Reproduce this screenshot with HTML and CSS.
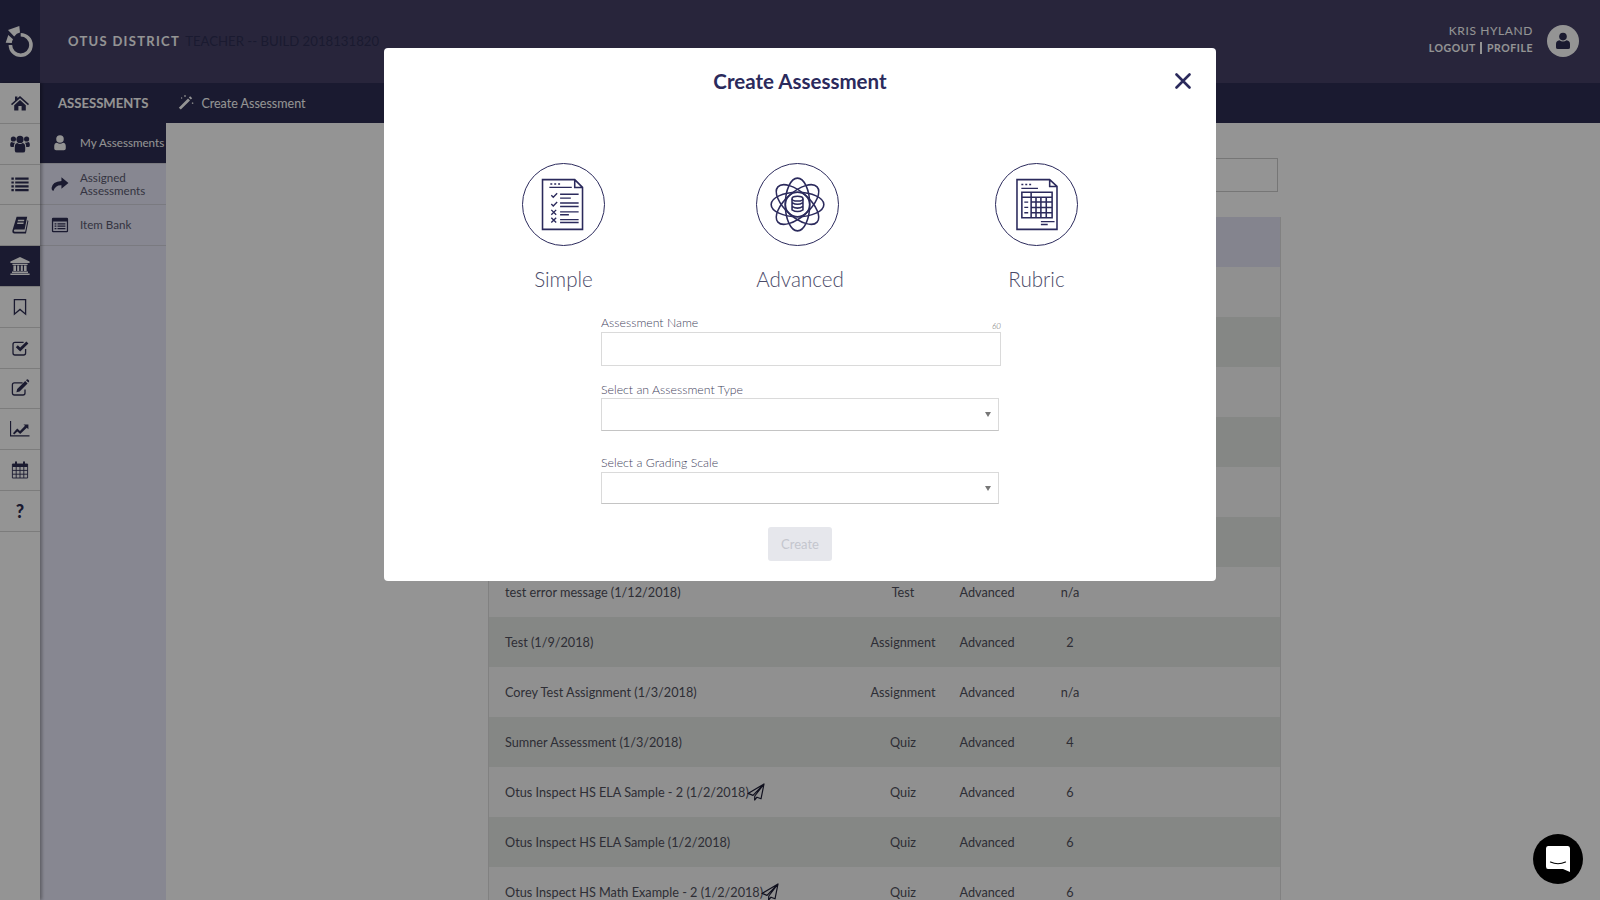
FILE: index.html
```html
<!DOCTYPE html>
<html lang="en">
<head>
  <meta charset="UTF-8" />
  <title>Create Assessment</title>
  <link rel="stylesheet" href="styles.css">
</head>
<body>
  <div class="pagina">
    <header class="topo">
      <div class="logo">
        <svg viewBox="0 0 40 83" width="40" height="83">
          <path d="M20.7 34.7 A10.3 10.3 0 1 1 10.4 45" fill="none" stroke="#fff" stroke-width="3.6"/>
          <path d="M8 30 L19.3 26 L20 32.6 Q16.6 33.2 14.2 36.4 Z" fill="#fff"/>
          <path d="M5.7 42.7 L8.3 35 L13 39.2 Q12 41 11.8 43 Z" fill="#fff"/>
        </svg>
      </div>
      <div class="escola">OTUS DISTRICT</div>
      <div class="build">TEACHER -- BUILD 2018131820</div>
      <div class="usuario">
        <div class="usuario-nome">KRIS HYLAND</div>
        <div class="usuario-links"><span>LOGOUT</span><i class="barra"></i><span>PROFILE</span></div>
      </div>
      <div class="avatar">
        <svg viewBox="0 0 20 20" width="20" height="20">
          <circle cx="10" cy="5.6" r="3.8" fill="#2e2e53"/>
          <path d="M3 16.4 V13 Q3 9.6 6.4 9.2 Q10 11.6 13.6 9.2 Q17 9.6 17 13 V16.4 Q17 18 15 18 H5 Q3 18 3 16.4 Z" fill="#2e2e53"/>
        </svg>
      </div>
    </header>

    <div class="corpo">
      <nav class="trilho">
        <a class="trilho-item"><svg viewBox="0 0 20 20"><path d="M10 3 L19 11 L18 12.2 L10 5.2 L2 12.2 L1 11 L5 7.4 V3.6 H7.4 V5.3 Z M4.2 12.2 L10 7 L15.8 12.2 V17.4 H11.6 V13 H8.4 V17.4 H4.2 Z"/></svg></a>
        <a class="trilho-item"><svg viewBox="0 0 20 20"><circle cx="10" cy="5.4" r="3.6"/><circle cx="3.4" cy="5" r="2.6"/><circle cx="16.6" cy="5" r="2.6"/><path d="M4.8 13 Q4.8 9.6 7.2 9 Q10 11 12.8 9 Q15.2 9.6 15.2 13 V16.4 Q15.2 18.6 13 18.6 H7 Q4.8 18.6 4.8 16.4 Z"/><path d="M.2 10 Q.4 8.2 1.8 8 Q3.4 9.2 5 8.6 Q4 10.4 3.8 13 H1.8 Q.2 13 .2 11.4 Z M19.8 10 Q19.6 8.2 18.2 8 Q16.6 9.2 15 8.6 Q16 10.4 16.2 13 H18.2 Q19.8 13 19.8 11.4 Z"/></svg></a>
        <a class="trilho-item"><svg viewBox="0 0 20 20"><path d="M1.4 3.6 H3.8 V5.8 H1.4 Z M5.2 3.6 H18.6 V5.8 H5.2 Z M1.4 7.4 H3.8 V9.6 H1.4 Z M5.2 7.4 H18.6 V9.6 H5.2 Z M1.4 11.2 H3.8 V13.4 H1.4 Z M5.2 11.2 H18.6 V13.4 H5.2 Z M1.4 15 H3.8 V17.2 H1.4 Z M5.2 15 H18.6 V17.2 H5.2 Z"/></svg></a>
        <a class="trilho-item"><svg viewBox="0 0 20 20"><path d="M6.6 1.8 H17.2 L14.6 14.4 H5 Q4 14.4 3.9 15.6 Q3.8 16.8 5 16.8 H15.2 L17.6 5 L18.4 6 L16 18.4 H4.4 Q2 18.4 2.4 15.4 Z M8 4.8 L7.7 6.2 H14 L14.3 4.8 Z M7.4 7.6 L7.1 9 H13.4 L13.7 7.6 Z"/></svg></a>
        <a class="trilho-item ativo"><svg viewBox="0 0 20 20"><path d="M10 1 L19.6 5.4 V7 H.4 V5.4 Z M2.4 7.8 H17.6 V9 H2.4 Z M3.4 9.6 H6 V15 H3.4 Z M7.2 9.6 H9.2 V15 H7.2 Z M10.8 9.6 H12.8 V15 H10.8 Z M14 9.6 H16.6 V15 H14 Z M2 15.6 H18 V17 H2 Z M.4 17.6 H19.6 V19 H.4 Z"/></svg></a>
        <a class="trilho-item"><svg viewBox="0 0 20 20"><path class="linha" d="M4.4 2.6 H15.6 V17.2 L10 12.4 L4.4 17.2 Z"/></svg></a>
        <a class="trilho-item"><svg viewBox="0 0 20 20"><path class="linha" d="M15.6 11 V15 Q15.6 17 13.6 17 H5 Q3 17 3 15 V6.4 Q3 4.4 5 4.4 H13.6"/><path d="M5.8 9.2 L7.8 7.2 L10.2 9.6 L16.4 3.4 L18.4 5.4 L10.2 13.6 Z"/></svg></a>
        <a class="trilho-item"><svg viewBox="0 0 20 20"><path class="linha" d="M15 11.4 V15 Q15 17 13 17 H4.4 Q2.4 17 2.4 15 V6.8 Q2.4 4.8 4.4 4.8 H12.6"/><path d="M7.2 11 L15.2 3 L17.6 5.4 L9.6 13.4 L6.4 14.2 Z M16 2.2 L16.8 1.4 Q17.4 1 18 1.6 L19 2.6 Q19.4 3.2 19 3.8 L18.4 4.6 Z"/></svg></a>
        <a class="trilho-item"><svg viewBox="0 0 20 20"><path class="linha" d="M.5 2 V16.9 H19.5"/><path d="M3 14.2 L7.2 9.6 L10 12 L15 6.8 L13.4 5.4 H18.4 V10.2 L16.8 8.8 L10.2 15 L7.4 12.6 L4.2 15.6 Z"/></svg></a>
        <a class="trilho-item"><svg viewBox="0 0 20 20"><path class="grade" d="M2.4 4 H17.6 V18 H2.4 Z"/><path d="M2.4 4 H17.6 V7 H2.4 Z"/><path class="grade" d="M2.4 10.4 H17.6 M2.4 14.2 H17.6 M6.2 7 V18 M10 7 V18 M13.8 7 V18"/><rect x="5" y="1.2" width="2" height="4.4" rx="1"/><rect x="13" y="1.2" width="2" height="4.4" rx="1"/></svg></a>
        <a class="trilho-item pergunta">?</a>
      </nav>

      <div class="area">
        <div class="subtopo">
          <div class="subtopo-titulo">ASSESSMENTS</div>
          <div class="subtopo-acao">
            <svg viewBox="0 0 16 16" width="16" height="16"><path d="M.8 13.8 L10 4.4 L12 6.4 L2.8 15.6 Z M10.8 3.6 L12.2 2.2 L14.2 4.2 L12.8 5.6 Z" fill="#fff"/><path d="M7 1 V3 M6 2 H8 M14.6 8.4 V10 M13.8 9.2 H15.4 M3.6 3.4 V4.6 M3 4 H4.2" stroke="#fff" stroke-width=".7"/></svg>
            <span>Create Assessment</span>
          </div>
        </div>
        <div class="abaixo">
          <aside class="lateral">
            <a class="lateral-item ativo">
              <svg viewBox="0 0 20 20"><circle cx="10" cy="5.6" r="4.2"/><path d="M3.6 16 V13.4 Q3.6 10 6.6 9.6 Q10 12 13.4 9.6 Q16.4 10 16.4 13.4 V16 Q16.4 18 14.4 18 H5.6 Q3.6 18 3.6 16 Z"/></svg>
              <span>My Assessments</span>
            </a>
            <a class="lateral-item">
              <svg viewBox="0 0 20 20"><path d="M11.6 2.6 L19.4 9 L11.6 15.4 V11.4 Q5 11 2.6 17.8 Q.6 17.6 .6 14.4 Q1.4 7.4 11.6 6.6 Z"/></svg>
              <span>Assigned Assessments</span>
            </a>
            <a class="lateral-item">
              <svg viewBox="0 0 20 20"><path d="M2.4 2 H17.6 Q19 2 19 3.4 V16.6 Q19 18 17.6 18 H2.4 Q1 18 1 16.6 V3.4 Q1 2 2.4 2 Z M2.4 6 V16 Q2.4 16.6 3 16.6 H17 Q17.6 16.6 17.6 16 V6 Z M4 8 H6 V9.4 H4 Z M7.2 8 H16 V9.4 H7.2 Z M4 10.6 H6 V12 H4 Z M7.2 10.6 H16 V12 H7.2 Z M4 13.2 H6 V14.6 H4 Z M7.2 13.2 H16 V14.6 H7.2 Z"/></svg>
              <span>Item Bank</span>
            </a>
          </aside>

          <main class="conteudo">
            <div class="coluna">
              <div class="busca"></div>
              <div class="tabela">
                <div class="linha-tab cabecalho"></div>
                <div class="linha-tab"></div>
                <div class="linha-tab"></div>
                <div class="linha-tab"></div>
                <div class="linha-tab"></div>
                <div class="linha-tab"></div>
                <div class="linha-tab"></div>
                <div class="linha-tab"><div>test error message (1/12/2018)</div><div class="cen">Test</div><div class="cen">Advanced</div><div class="cen">n/a</div></div>
                <div class="linha-tab"><div>Test (1/9/2018)</div><div class="cen">Assignment</div><div class="cen">Advanced</div><div class="cen">2</div></div>
                <div class="linha-tab"><div>Corey Test Assignment (1/3/2018)</div><div class="cen">Assignment</div><div class="cen">Advanced</div><div class="cen">n/a</div></div>
                <div class="linha-tab"><div>Sumner Assessment (1/3/2018)</div><div class="cen">Quiz</div><div class="cen">Advanced</div><div class="cen">4</div></div>
                <div class="linha-tab">
                  <div class="com-icone">Otus Inspect HS ELA Sample - 2 (1/2/2018)<svg viewBox="0 0 18 18" width="18" height="18"><path d="M17 1 L1 10.4 L6 12.4 L17 1 L7.8 13 L7.6 17 L10 14.2 L14 15.8 Z" fill="none" stroke="#1c1c34" stroke-width="1.2" stroke-linejoin="round"/></svg></div>
                  <div class="cen">Quiz</div><div class="cen">Advanced</div><div class="cen">6</div>
                </div>
                <div class="linha-tab"><div>Otus Inspect HS ELA Sample (1/2/2018)</div><div class="cen">Quiz</div><div class="cen">Advanced</div><div class="cen">6</div></div>
                <div class="linha-tab">
                  <div class="com-icone">Otus Inspect HS Math Example - 2 (1/2/2018)<svg viewBox="0 0 18 18" width="18" height="18"><path d="M17 1 L1 10.4 L6 12.4 L17 1 L7.8 13 L7.6 17 L10 14.2 L14 15.8 Z" fill="none" stroke="#1c1c34" stroke-width="1.2" stroke-linejoin="round"/></svg></div>
                  <div class="cen">Quiz</div><div class="cen">Advanced</div><div class="cen">6</div>
                </div>
              </div>
            </div>
          </main>
        </div>
      </div>
    </div>
  </div>

  <div class="veu">
    <section class="modal">
      <h1>Create Assessment</h1>
      <button class="fechar" aria-label="Close">
        <svg viewBox="0 0 16 16" width="16" height="16"><path d="M1.5 1.5 L14.5 14.5 M14.5 1.5 L1.5 14.5" stroke="#2b2a5c" stroke-width="2.6" stroke-linecap="round"/></svg>
      </button>

      <div class="tipos">
        <div class="tipo">
          <div class="circulo">
            <svg viewBox="0 0 83 83" width="81" height="81">
              <path class="traco" d="M20 16 H53 L61 24 V67 H20 Z M53 16 V24 H61"/>
              <path class="fino" d="M28 20.5 H30 M32 20.5 H34 M36 20.5 H38 M27 24 H50"/>
              <path class="fino" d="M29 32 L31 34 L35 30 M29 41 L31 43 L35 39"/>
              <path class="fino" d="M29 47 L34 52 M34 47 L29 52 M29 55 L34 60 M34 55 L29 60"/>
              <path class="fino" d="M38 31 H57 M38 35 H49 M38 40 H57 M38 43.5 H57 M38 49 H57 M38 52 H47 M38 57 H57 M38 60 H57"/>
            </svg>
          </div>
          <div class="tipo-nome">Simple</div>
        </div>
        <div class="tipo">
          <div class="circulo circulo-meio">
            <svg viewBox="0 0 83 83" width="81" height="81">
              <g class="traco">
                <ellipse cx="41.5" cy="41.5" rx="27" ry="12.5"/>
                <ellipse cx="41.5" cy="41.5" rx="27" ry="12.5" transform="rotate(90 41.5 41.5)"/>
                <ellipse cx="41.5" cy="41.5" rx="27" ry="12.5" transform="rotate(42 41.5 41.5)"/>
                <ellipse cx="41.5" cy="41.5" rx="27" ry="12.5" transform="rotate(-42 41.5 41.5)"/>
                <circle cx="41.5" cy="41.5" r="12.5"/>
                <ellipse cx="41.5" cy="35.5" rx="5.6" ry="2.4"/>
                <path d="M35.9 35.5 V47 Q41.5 50.5 47.1 47 V35.5 M35.9 39.5 Q41.5 43 47.1 39.5 M35.9 43.5 Q41.5 47 47.1 43.5"/>
              </g>
            </svg>
          </div>
          <div class="tipo-nome">Advanced</div>
        </div>
        <div class="tipo">
          <div class="circulo">
            <svg viewBox="0 0 83 83" width="81" height="81">
              <path class="traco" d="M21.5 16 H55 L62.5 23 V67 H21.5 Z M55 16 V23 H62.5"/>
              <path class="fino" d="M26 21 H28 M30 21 H32 M34 21 H36 M26 25 H43"/>
              <path class="traco" d="M26.5 29 H57.5 V55 H26.5 Z M26.5 34 H57.5 M36 29 V55 M41 34 V55 M46 34 V55 M51.5 34 V55 M36 39 H57.5 M36 44.5 H57.5 M36 50 H57.5"/>
              <path class="fino" d="M29 39 H33 M29 44.5 H33 M29 50 H33 M46 59 H60 M46 62 H53"/>
            </svg>
          </div>
          <div class="tipo-nome">Rubric</div>
        </div>
      </div>

      <form class="formulario">
        <div class="rotulo-linha">
          <label class="rotulo" for="nome">Assessment Name</label>
          <span class="contador">60</span>
        </div>
        <input class="campo" id="nome" type="text" />

        <label class="rotulo rotulo-2" for="tipo">Select an Assessment Type</label>
        <div class="selecao"><select id="tipo"><option></option></select></div>

        <label class="rotulo rotulo-3" for="escala">Select a Grading Scale</label>
        <div class="selecao selecao-ultima"><select id="escala"><option></option></select></div>

        <button class="btn-criar" type="button" disabled>Create</button>
      </form>
    </section>
  </div>

  <button class="chat" aria-label="Chat">
    <svg viewBox="0 0 26 28" width="26" height="28"><path d="M3 1 H23 Q25 1 25 3.5 V27 L18 24 H3 Q1 24 1 21.5 V3.5 Q1 1 3 1 Z" fill="#fff"/><path d="M5.5 17 Q13 20.5 20.5 17" fill="none" stroke="#000" stroke-width="1.2" stroke-linecap="round"/></svg>
  </button>
</body>
</html>
```

FILE: styles.css
```css
:root {
  --roxo: #454167;
  --roxo-escuro: #2e2e53;
  --lilas: #e9e9fa;
  --navy: #2b2a5c;
  --texto: #50505c;
}
* {
  box-sizing: border-box;
}
body {
  margin: 0;
  height: 900px;
  overflow: hidden;
  font-family: 'Lato', sans-serif;
  background-color: white;
}
.pagina {
  height: 900px;
  display: flex;
  flex-direction: column;
}

/* topo */
.topo {
  height: 83px;
  background-color: var(--roxo);
  display: flex;
  align-items: center;
  flex-shrink: 0;
}
.logo {
  width: 40px;
  height: 83px;
  background-color: var(--roxo-escuro);
}
.escola {
  margin-left: 28px;
  margin-top: -2px;
  font-size: 13px;
  font-weight: 700;
  letter-spacing: 1.3px;
  color: #fff;
}
.build {
  margin-left: 5px;
  margin-top: -2px;
  font-size: 13.2px;
  color: var(--roxo-escuro);
}
.usuario {
  margin-left: auto;
  text-align: right;
  color: #fff;
  margin-top: -6px;
}
.usuario-nome {
  font-size: 12px;
  letter-spacing: 0.6px;
  line-height: 18px;
}
.usuario-links {
  font-size: 10.5px;
  font-weight: 700;
  letter-spacing: 0.55px;
  line-height: 16px;
  display: flex;
  align-items: center;
  justify-content: flex-end;
}
.barra {
  width: 2px;
  height: 12px;
  background-color: #fff;
  margin: 0 5px 0 4px;
}
.avatar {
  width: 32px;
  height: 32px;
  border-radius: 50%;
  background-color: white;
  margin: -2px 21px 0 14px;
  display: flex;
  align-items: center;
  justify-content: center;
}

.corpo {
  flex: 1;
  display: flex;
  min-height: 0;
}

/* trilho de icones */
.trilho {
  width: 40px;
  flex-shrink: 0;
  background-color: white;
  box-shadow: 2px 0 3px rgba(0,0,0,0.3);
  position: relative;
  z-index: 1;
}
.trilho-item {
  height: 40.8px;
  display: flex;
  align-items: center;
  justify-content: center;
  border-bottom: 1px solid #d6d6d6;
}
.trilho-item svg {
  width: 20px;
  height: 20px;
  fill: var(--roxo-escuro);
}
.trilho-item .linha {
  fill: none;
  stroke: var(--roxo-escuro);
  stroke-width: 1.3;
}
.trilho-item .grade {
  fill: none;
  stroke: var(--roxo-escuro);
  stroke-width: 0.9;
}
.trilho-item.ativo {
  background-color: var(--roxo-escuro);
}
.trilho-item.ativo svg {
  fill: white;
}
.pergunta {
  font-size: 18px;
  font-weight: 900;
  color: var(--roxo-escuro);
}

.area {
  flex: 1;
  display: flex;
  flex-direction: column;
  min-width: 0;
}
.subtopo {
  height: 40px;
  background-color: var(--roxo-escuro);
  display: flex;
  align-items: center;
  color: #fff;
  flex-shrink: 0;
}
.subtopo-titulo {
  margin-left: 18px;
  font-size: 13.1px;
  font-weight: 700;
}
.subtopo-acao {
  margin-left: 30px;
  display: flex;
  align-items: center;
  gap: 7px;
  font-size: 12.5px;
}
.subtopo-acao svg {
  margin-top: -2px;
}

.abaixo {
  flex: 1;
  display: flex;
  min-height: 0;
}

/* menu lateral */
.lateral {
  width: 126px;
  flex-shrink: 0;
  background-color: var(--lilas);
}
.lateral-item {
  height: 41px;
  display: flex;
  align-items: center;
  padding-left: 11px;
  padding-bottom: 1px;
  gap: 11px;
  font-size: 11.6px;
  line-height: 13px;
  color: #5a5a70;
  border-bottom: 1px solid #d2d2dc;
}
.lateral-item svg {
  width: 18px;
  height: 18px;
  fill: var(--roxo-escuro);
  flex-shrink: 0;
}
.lateral-item.ativo {
  background-color: var(--roxo-escuro);
  color: #fff;
  white-space: nowrap;
}
.lateral-item.ativo svg {
  fill: #fff;
}

/* tabela */
.conteudo {
  flex: 1;
  min-width: 0;
  padding-left: 322px;
}
.coluna {
  width: 793px;
  display: flex;
  flex-direction: column;
}
.busca {
  align-self: flex-end;
  margin: 35px 3px 25px 0;
  width: 300px;
  height: 34px;
  border: 1px solid #ccc;
}
.tabela {
  border-left: 1px solid #dfdfdf;
  border-right: 1px solid #dfdfdf;
}
.linha-tab {
  height: 50px;
  display: grid;
  grid-template-columns: 328px 172px 0 0;
  align-items: center;
  padding-left: 16px;
  font-size: 12.7px;
  color: var(--texto);
  background-color: #f8f8f8;
  position: relative;
  white-space: nowrap;
}
.linha-tab:nth-child(odd) {
  background-color: #e5e9e6;
}
.linha-tab.cabecalho {
  background-color: #e4e4f5;
}
.linha-tab .cen {
  position: absolute;
  transform: translateX(-50%);
}
.linha-tab .cen:nth-child(2) {
  left: 414px;
}
.linha-tab .cen:nth-child(3) {
  left: 498px;
}
.linha-tab .cen:nth-child(4) {
  left: 581px;
}
.com-icone {
  display: flex;
  align-items: center;
}
.com-icone svg {
  margin-left: -2px;
}

/* modal */
.veu {
  position: fixed;
  top: 0;
  left: 0;
  right: 0;
  bottom: 0;
  background-color: rgba(0,0,0,0.42);
  z-index: 5;
}
.modal {
  position: relative;
  margin: 48px 0 0 384px;
  width: 832px;
  height: 533px;
  background-color: white;
  border-radius: 4px;
  padding-top: 21px;
}
.modal h1 {
  margin: 0;
  text-align: center;
  font-size: 20.5px;
  line-height: 24px;
  font-weight: 700;
  color: var(--navy);
}
.fechar {
  position: absolute;
  top: 25px;
  right: 25px;
  padding: 0;
  border: none;
  background: none;
  line-height: 0;
}
.tipos {
  margin-top: 70px;
  display: flex;
  justify-content: center;
}
.tipo {
  width: 236.5px;
  display: flex;
  flex-direction: column;
  align-items: center;
}
.circulo {
  width: 83px;
  height: 83px;
  border: 1px solid var(--navy);
  border-radius: 50%;
}
.circulo-meio {
  margin-right: 5px;
}
.traco,
.fino {
  fill: none;
  stroke: var(--navy);
}
.traco {
  stroke-width: 1.6;
}
.fino {
  stroke-width: 1.4;
}
.tipo-nome {
  margin-top: 20px;
  font-size: 20.6px;
  line-height: 26px;
  font-weight: 300;
  color: #4a4a68;
}

.formulario {
  margin: 23px 0 0 217px;
  width: 400px;
  display: flex;
  flex-direction: column;
  align-items: flex-start;
}
.rotulo-linha {
  width: 100%;
  height: 16px;
  display: flex;
  justify-content: space-between;
}
.rotulo {
  font-size: 12.3px;
  line-height: 16px;
  font-weight: 300;
  color: #3f3f5c;
}
.contador {
  font-size: 8px;
  font-style: italic;
  font-weight: 300;
  line-height: 12px;
  padding-top: 5px;
  color: #666;
}
.campo {
  margin-top: 1px;
  width: 400px;
  height: 34px;
  border: 1px solid #dadada;
  outline: none;
}
.rotulo-2 {
  margin-top: 16px;
}
.rotulo-3 {
  margin-top: 24px;
}
.selecao {
  width: 398px;
  height: 33px;
  position: relative;
}
.selecao-ultima {
  margin-top: 1px;
  height: 32px;
}
.selecao select {
  width: 100%;
  height: 100%;
  appearance: none;
  background-color: white;
  border: 1px solid #dadada;
  border-bottom-color: #c4c4c4;
  border-radius: 0;
  outline: none;
}
.selecao::after {
  content: '';
  position: absolute;
  right: 8px;
  top: 14px;
  border-left: 3.5px solid transparent;
  border-right: 3.5px solid transparent;
  border-top: 5px solid #777;
}
.btn-criar {
  margin: 23px 0 0 167px;
  width: 64px;
  height: 34px;
  border: none;
  border-radius: 3px;
  background-color: #e6e7ec;
  color: #c4c6ce;
  font-family: inherit;
  font-size: 13px;
}

.chat {
  position: fixed;
  right: 17px;
  bottom: 16px;
  width: 50px;
  height: 50px;
  border: none;
  border-radius: 50%;
  background-color: black;
  padding: 0;
  z-index: 6;
  display: flex;
  align-items: center;
  justify-content: center;
}
```
